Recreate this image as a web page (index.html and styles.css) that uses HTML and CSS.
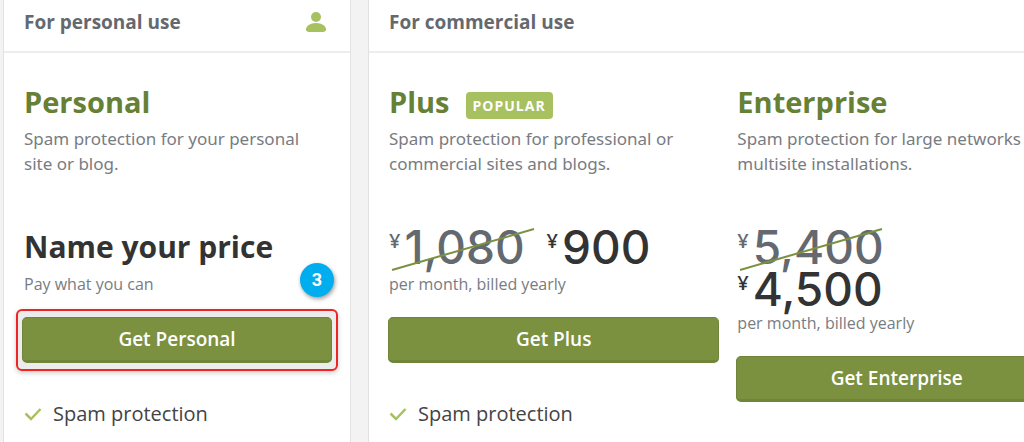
FILE: index.html
```
<!DOCTYPE html>
<html lang="en">
<head>
    <meta charset="utf-8">
    <title>Plans and Pricing</title>
    <link rel="stylesheet" href="styles.css">
</head>
<body>
    <main class="pricing">
        <section class="card">
            <header class="card-header">
                <h2>For personal use</h2>
                <svg class="user-icon" viewBox="0 0 20 20" aria-hidden="true">
                    <circle cx="10" cy="5" r="5"/>
                    <path d="M10 11c6 0 10 3.200 10 6.500 0 2-2 2.500-4 2.500H4c-2 0-4-.5-4-2.500C0 14.200 4 11 10 11z"/>
                </svg>
            </header>
            <div class="plans">
                <article class="plan">
                    <h3>Personal</h3>
                    <p class="description">Spam protection for your personal site or blog.</p>
                    <div class="price name-price">Name your price</div>
                    <p class="billing">Pay what you can</p>
                    <div class="highlight">
                        <button type="button">Get Personal</button>
                        <span class="step">3</span>
                    </div>
                    <ul class="features">
                        <li><svg class="check" viewBox="0 0 18 14" aria-hidden="true"><path d="M1.500 6.500l5.500 5.500L16.500 2"/></svg>Spam protection</li>
                    </ul>
                </article>
            </div>
        </section>

        <section class="card">
            <header class="card-header">
                <h2>For commercial use</h2>
            </header>
            <div class="plans commercial">
                <article class="plan">
                    <h3>Plus <span class="badge">Popular</span></h3>
                    <p class="description">Spam protection for professional or commercial sites and blogs.</p>
                    <div class="price">
                        <del><sup>¥</sup>1,080<svg class="strike" viewBox="0 0 100 100" preserveAspectRatio="none" aria-hidden="true"><path d="M0 100L100 0"/></svg></del>
                        <ins><sup>¥</sup>900</ins>
                    </div>
                    <p class="billing">per month, billed yearly</p>
                    <button type="button">Get Plus</button>
                    <ul class="features">
                        <li><svg class="check" viewBox="0 0 18 14" aria-hidden="true"><path d="M1.500 6.500l5.500 5.500L16.500 2"/></svg>Spam protection</li>
                    </ul>
                </article>
                <article class="plan">
                    <h3>Enterprise</h3>
                    <p class="description">Spam protection for large networks <br>multisite installations.</p>
                    <div class="price">
                        <del><sup>¥</sup>5,400<svg class="strike" viewBox="0 0 100 100" preserveAspectRatio="none" aria-hidden="true"><path d="M0 100L100 0"/></svg></del>
                        <ins><sup>¥</sup>4,500</ins>
                    </div>
                    <p class="billing">per month, billed yearly</p>
                    <button type="button">Get Enterprise</button>
                </article>
            </div>
        </section>
    </main>
</body>
</html>
```
FILE: styles.css
```
* {
    box-sizing: border-box;
}

body {
    margin: 0;
    background: #f3f3f3;
    color: #646970;
    font-family: "Open Sans", "Noto Sans", sans-serif;
    overflow: hidden;
}

h2, h3, p, ul {
    margin: 0;
    padding: 0;
}

.pricing {
    display: grid;
    grid-template-columns: 348px 1fr;
    gap: 17px;
    min-width: 1080px;
    min-height: 100vh;
    padding: 0 3px;
}

.card {
    background: #fff;
    border: 1px solid #e2e2e2;
    border-width: 0 1px;
}

.card-header {
    display: flex;
    align-items: center;
    justify-content: space-between;
    height: 53px;
    padding: 0 24px 8px 20px;
    border-bottom: 2px solid #ededed;
}

.card-header h2 {
    font-size: 19px;
    line-height: 28px;
    font-weight: 700;
}

.user-icon {
    width: 20px;
    height: 20px;
    fill: #a7c060;
}

.plans {
    display: grid;
    gap: 17px;
    padding: 29px 19px;
}

.commercial {
    grid-template-columns: 31fr 30fr;
}

h3 {
    display: flex;
    align-items: center;
    gap: 16px;
    padding: 0 1px;
    color: #668035;
    font-size: 29px;
    line-height: 40px;
    font-weight: 700;
}

.badge {
    padding: 0 7px;
    margin-top: 6px;
    border-radius: 4px;
    background: #a7c060;
    color: #fff;
    font-size: 14px;
    line-height: 27px;
    letter-spacing: 1px;
    text-transform: uppercase;
}

.description {
    height: 104px;
    padding: 4px 1px 0;
    color: #787c82;
    font-family: "Noto Sans", "Open Sans", sans-serif;
    font-size: 17px;
    line-height: 25px;
}

.price {
    display: flex;
    flex-wrap: wrap;
    align-content: flex-start;
    column-gap: 22px;
    min-height: 45px;
    padding: 0 16px 0 1px;
    color: #333;
    font-family: Inter, sans-serif;
    font-size: 46px;
    line-height: 42px;
    font-weight: 500;
}

.name-price {
    font-family: "Open Sans", sans-serif;
    font-size: 30px;
    font-weight: 700;
}

.price del,
.price ins {
    position: relative;
    display: flex;
    text-decoration: none;
}

.price del {
    color: #646970;
}

.price sup {
    margin-right: 4px;
    font-family: "Open Sans", sans-serif;
    font-size: 20px;
    line-height: 30px;
    font-weight: 600;
}

/* diagonal line over the old price */
.strike {
    position: absolute;
    left: 3px;
    top: 3px;
    width: 142px;
    height: 41px;
    overflow: visible;
}

.strike path {
    fill: none;
    stroke: #7b9140;
    stroke-width: 2px;
    vector-effect: non-scaling-stroke;
}

.billing {
    padding: 0 1px;
    margin-bottom: 20px;
    color: #787c82;
    font-size: 16px;
    line-height: 26px;
}

button {
    display: block;
    width: 100%;
    height: 46px;
    padding: 0;
    border: 1px solid #6f853a;
    border-bottom-width: 3px;
    border-radius: 5px;
    background: #7b9140;
    color: #fff;
    font-family: inherit;
    font-size: 19px;
    font-weight: 600;
    cursor: pointer;
}

.highlight {
    position: relative;
    margin: -8px -7px;
    padding: 6px 4px;
    border: 2px solid #ee2524;
    border-radius: 6px;
    background: #ececec;
    box-shadow: 0 2px 5px rgba(0, 0, 0, 0.2);
}

.step {
    position: absolute;
    right: 2px;
    top: -48px;
    width: 34px;
    height: 34px;
    border-radius: 50%;
    background: #00aeef;
    box-shadow: 1px 2px 4px rgba(0, 0, 0, 0.4);
    color: #fff;
    font-family: Roboto, sans-serif;
    font-size: 18px;
    line-height: 33px;
    font-weight: 700;
    text-align: center;
}

.features {
    padding: 36px 1px 0;
    color: #444;
    font-size: 20px;
    line-height: 30px;
    list-style: none;
}

.features li {
    display: flex;
    align-items: center;
    gap: 11px;
}

.check {
    width: 18px;
    height: 14px;
    fill: none;
    stroke: #a7c060;
    stroke-width: 2.5px;
}
```
